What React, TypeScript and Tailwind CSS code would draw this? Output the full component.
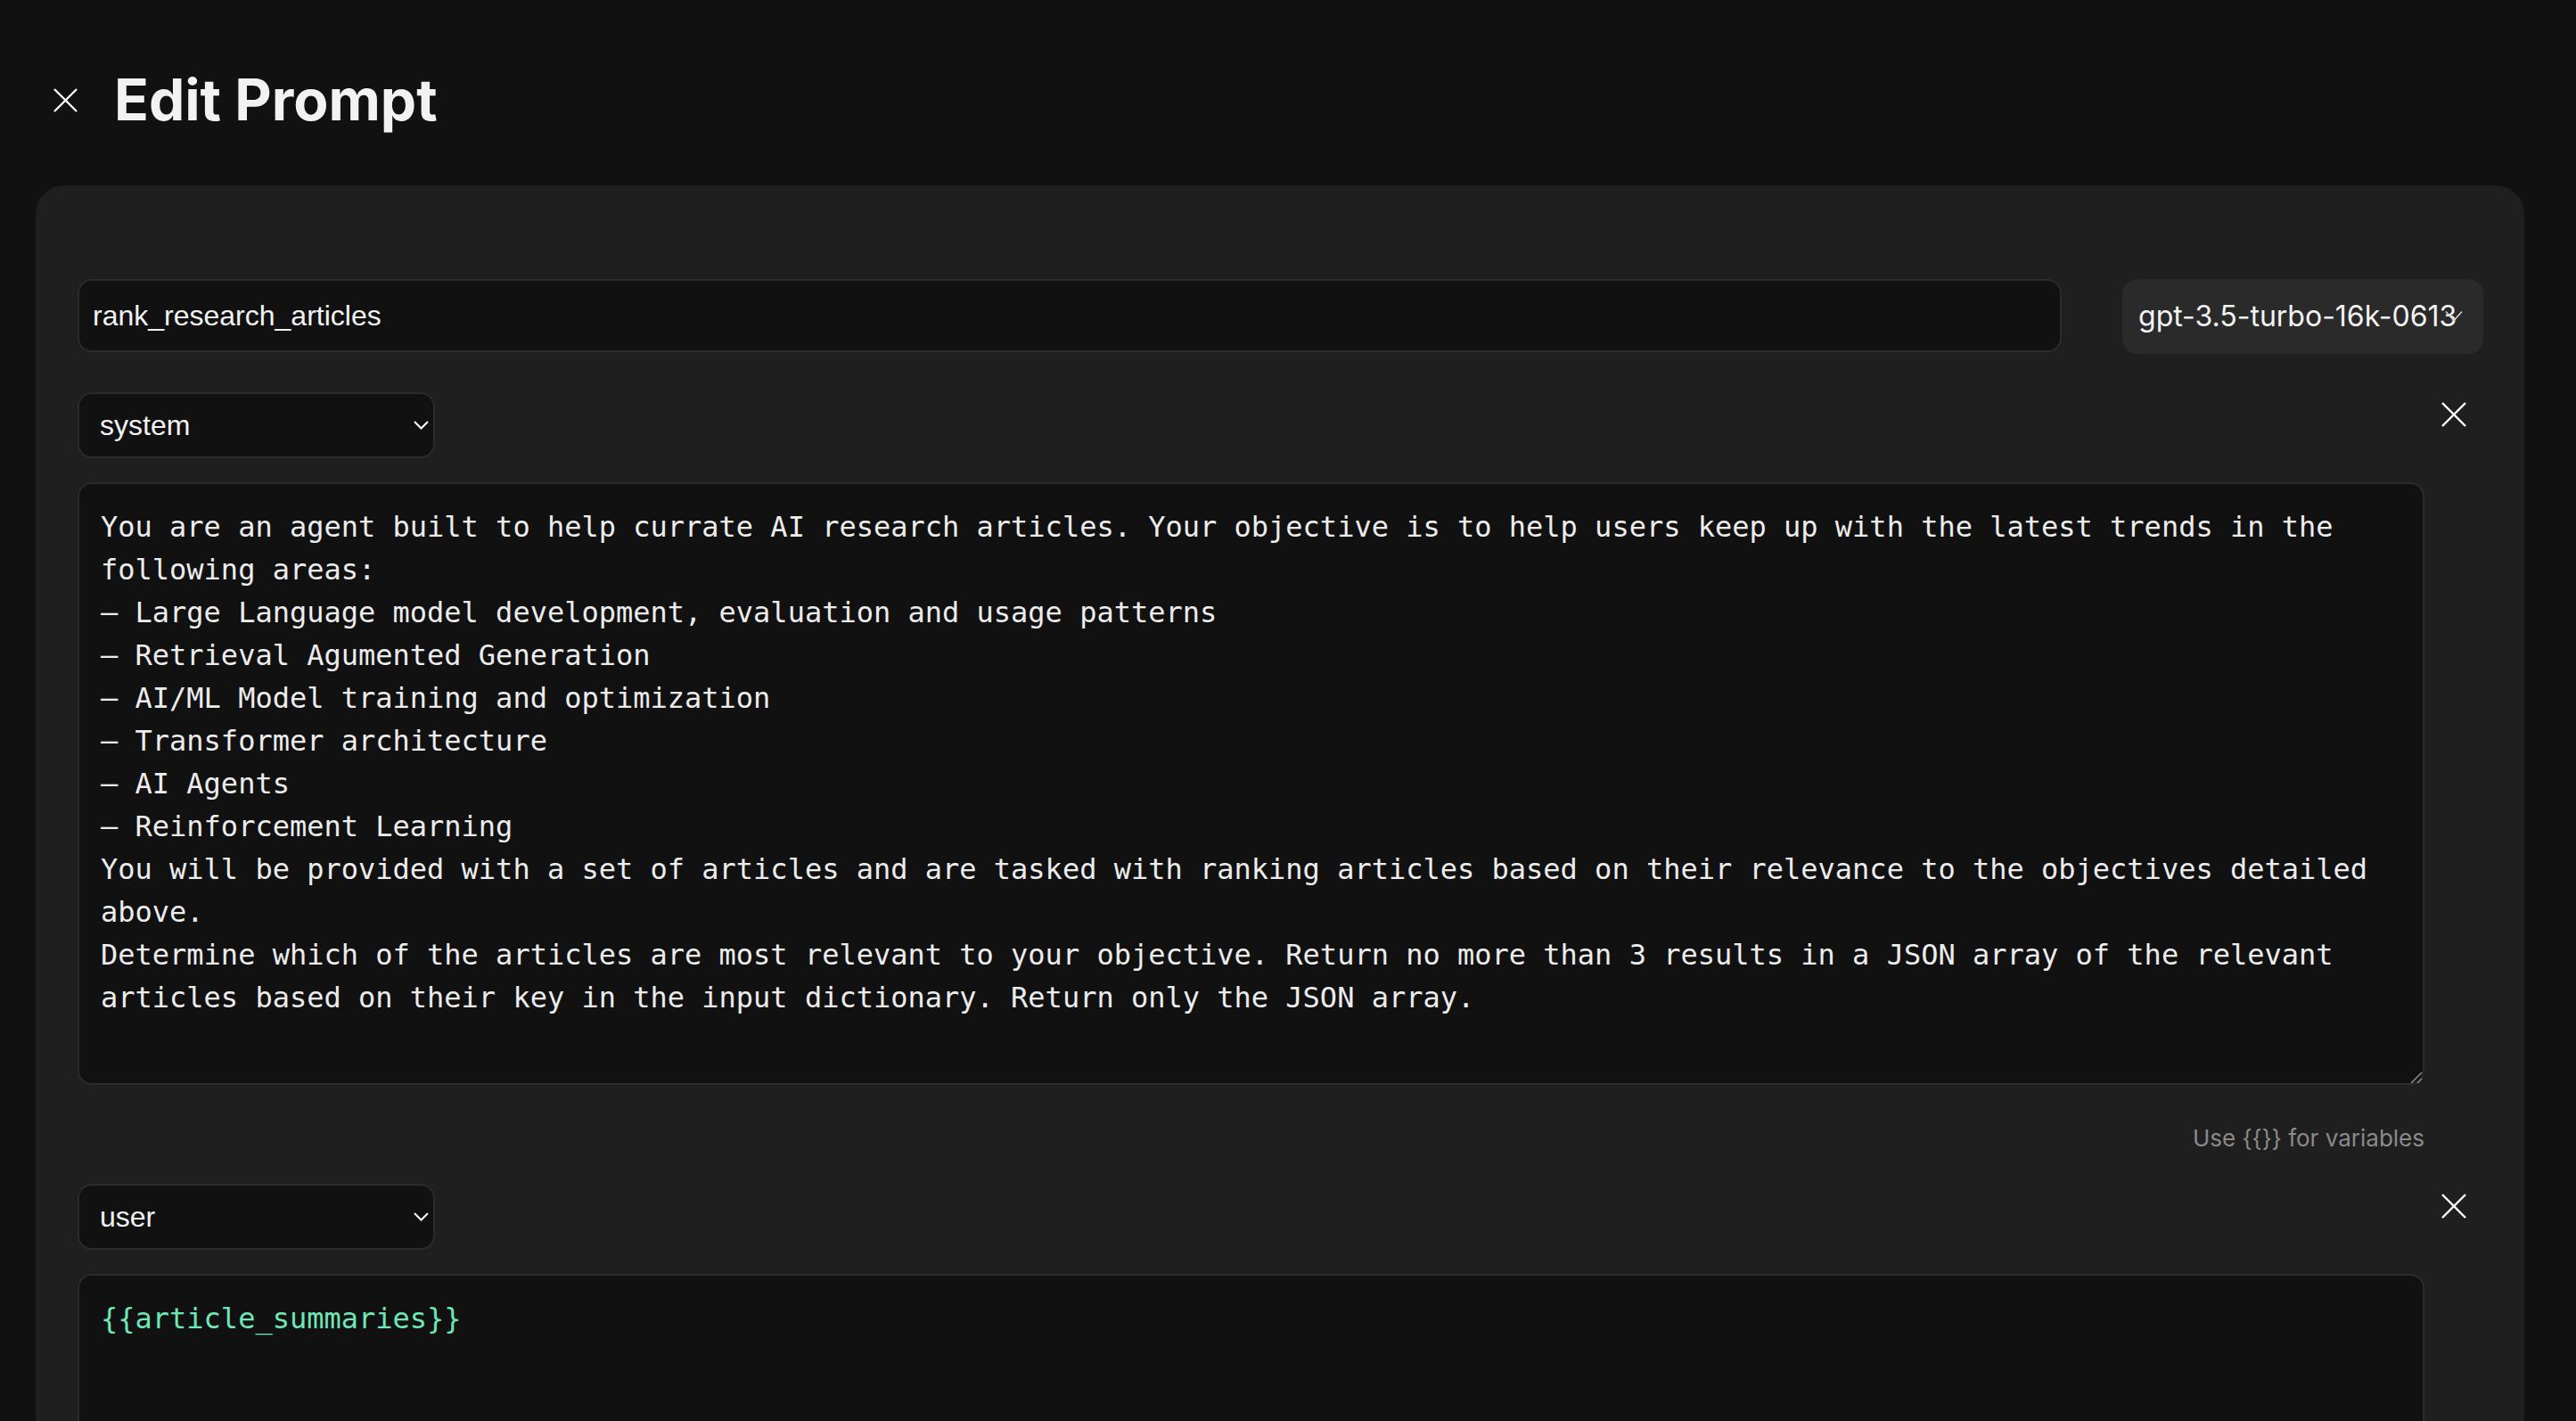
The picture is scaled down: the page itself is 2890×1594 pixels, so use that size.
const systemPrompt = `You are an agent built to help currate AI research articles. Your objective is to help users keep up with the latest trends in the following areas:
– Large Language model development, evaluation and usage patterns
– Retrieval Agumented Generation
– AI/ML Model training and optimization
– Transformer architecture
– AI Agents
– Reinforcement Learning
You will be provided with a set of articles and are tasked with ranking articles based on their relevance to the objectives detailed above.
Determine which of the articles are most relevant to your objective. Return no more than 3 results in a JSON array of the relevant articles based on their key in the input dictionary. Return only the JSON array.`

const userPrompt = '{{article_summaries}}'

function XIcon({ className }: { className?: string }) {
  return (
    <svg viewBox="0 0 28 28" className={className} fill="none" stroke="currentColor" strokeWidth={2.4}>
      <line x1="1" y1="1" x2="27" y2="27" />
      <line x1="27" y1="1" x2="1" y2="27" />
    </svg>
  )
}

function RoleSelect({ value }: { value: string }) {
  return (
    <div className="relative w-[401px]">
      <select
        defaultValue={value}
        className="block h-[74px] w-full appearance-none rounded-[16px] border-2 border-[#2b2b2b] bg-[#111111] pl-[23px] pr-[40px] font-['Liberation_Sans',Arial,sans-serif] text-[32px] text-[#f2f2f2] outline-none"
      >
        <option value="system">system</option>
        <option value="user">user</option>
        <option value="assistant">assistant</option>
      </select>
      <svg
        viewBox="0 0 17 10"
        className="pointer-events-none absolute right-[7px] top-1/2 h-[10px] w-[17px] -translate-y-1/2 text-white"
        fill="none"
        stroke="currentColor"
        strokeWidth={2}
      >
        <polyline points="1,1 8.5,8.5 16,1" />
      </svg>
    </div>
  )
}

function MessageBlock({
  role,
  text,
  textColor,
  hint,
}: {
  role: string
  text: string
  textColor: string
  hint?: boolean
}) {
  return (
    <div className="flex">
      <div className="min-w-0 flex-1">
        <RoleSelect value={role} />
        <div className="relative mt-[27px]">
          <textarea
            defaultValue={text}
            spellCheck={false}
            className={`block h-[676px] w-full resize-none rounded-[16px] border-2 border-[#2b2b2b] bg-[#111111] p-[24px] font-['DejaVu_Sans_Mono',monospace] text-[32px] leading-[48px] outline-none ${textColor}`}
          />
          {/* resize grip */}
          <svg
            viewBox="0 0 14 14"
            className="pointer-events-none absolute bottom-[1px] right-[2px] h-[14px] w-[14px] text-[#8a8a8a]"
            fill="none"
            stroke="currentColor"
            strokeWidth={1.6}
          >
            <line x1="1" y1="13" x2="13" y2="1" />
            <line x1="8" y1="13" x2="13" y2="8" />
          </svg>
        </div>
        {hint && (
          <p className="mt-[41px] text-right text-[26px] leading-[38px] text-[#8a8a8a]">
            Use {'{{}}'} for variables
          </p>
        )}
      </div>
      <button className="flex h-[50px] w-[66px] shrink-0 items-center justify-center text-white">
        <XIcon className="h-[28px] w-[28px]" />
      </button>
    </div>
  )
}

export default function App() {
  return (
    <div className="h-screen overflow-hidden bg-[#111111] font-['Inter',sans-serif] text-[#f2f2f2]">
      <header className="flex items-center gap-[41px] pb-[64px] pl-[60px] pt-[80px]">
        <button className="text-white">
          <XIcon className="h-[27px] w-[27px]" />
        </button>
        <h1 className="text-[64px] font-bold leading-[64px]">Edit Prompt</h1>
      </header>

      <main className="ml-[40px] mr-[58px] rounded-t-[32px] bg-[#1f1f1f] pl-[47px] pr-[46px] pt-[105px]">
        <div className="flex gap-[68px]">
          <input
            defaultValue="rank_research_articles"
            className="h-[82px] min-w-0 flex-1 rounded-[16px] border-2 border-[#2b2b2b] bg-[#111111] px-[15px] font-['Liberation_Sans',Arial,sans-serif] text-[32px] text-[#f2f2f2] outline-none"
          />
          <div className="relative w-[405px] shrink-0">
            <select
              defaultValue="gpt-3.5-turbo-16k-0613"
              className="block h-[84px] w-full appearance-none rounded-[16px] bg-[#2a2a2a] pl-[18px] pr-[20px] text-[32px] text-[#f2f2f2] outline-none"
            >
              <option value="gpt-3.5-turbo-16k-0613">gpt-3.5-turbo-16k-0613</option>
              <option value="gpt-4">gpt-4</option>
            </select>
            <svg
              viewBox="0 0 20 13"
              className="pointer-events-none absolute right-[23px] top-1/2 h-[13px] w-[20px] -translate-y-1/2 text-[#d0d0d0]"
              fill="none"
              stroke="currentColor"
              strokeWidth={1.6}
            >
              <polyline points="1,1 10,11 19,1" />
            </svg>
          </div>
        </div>

        <div className="mt-[43px]">
          <MessageBlock role="system" text={systemPrompt} textColor="text-[#ececec]" hint />
        </div>
        <div className="mt-[32px]">
          <MessageBlock role="user" text={userPrompt} textColor="text-[#6ee7b7]" />
        </div>
      </main>
    </div>
  )
}
